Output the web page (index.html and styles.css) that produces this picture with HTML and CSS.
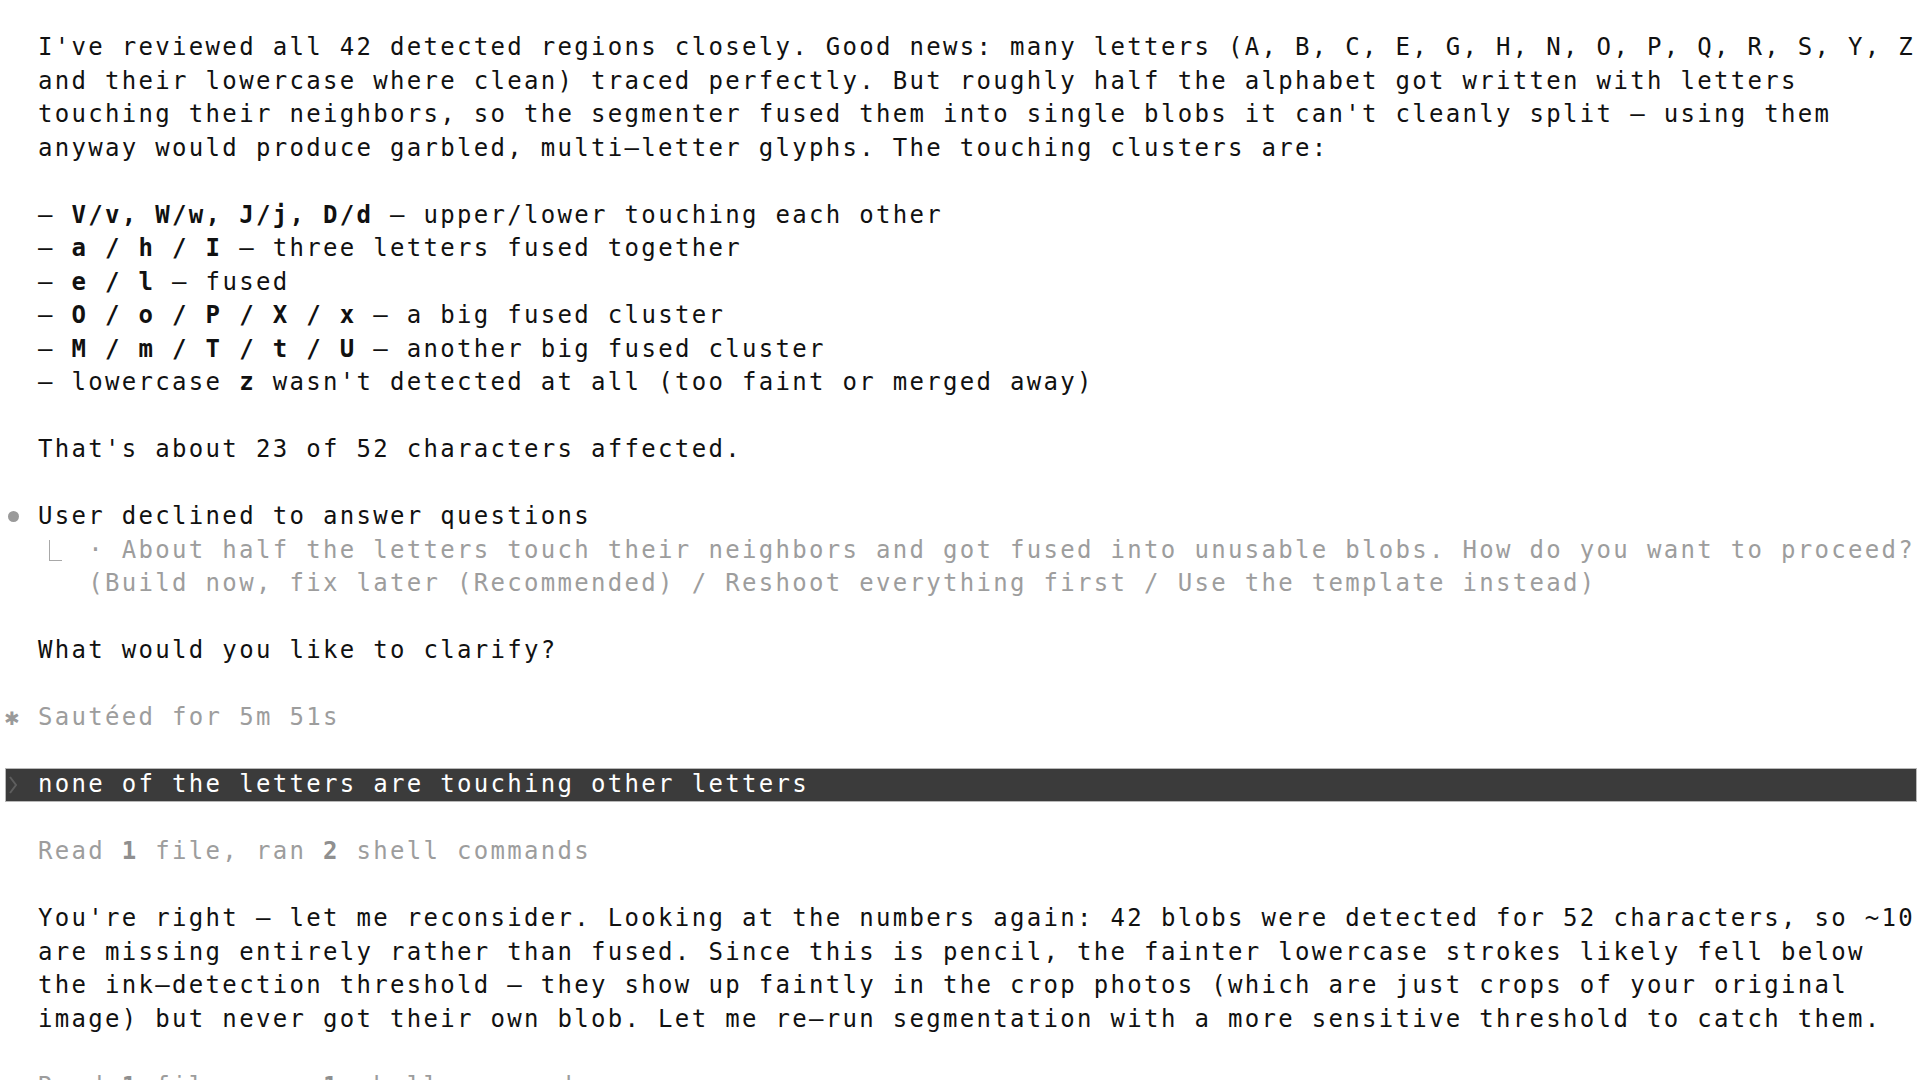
FILE: index.html
```html
<!DOCTYPE html>
<html lang="en">
<head>
<meta charset="utf-8">
<title>Terminal</title>
<link rel="stylesheet" href="styles.css">
</head>
<body>
<div class="term">
  <div class="row"><span class="gut"></span><span class="txt">I've reviewed all 42 detected regions closely. Good news: many letters (A, B, C, E, G, H, N, O, P, Q, R, S, Y, Z</span></div>
  <div class="row"><span class="gut"></span><span class="txt">and their lowercase where clean) traced perfectly. But roughly half the alphabet got written with letters</span></div>
  <div class="row"><span class="gut"></span><span class="txt">touching their neighbors, so the segmenter fused them into single blobs it can't cleanly split – using them</span></div>
  <div class="row"><span class="gut"></span><span class="txt">anyway would produce garbled, multi–letter glyphs. The touching clusters are:</span></div>
  <div class="row blank"></div>
  <div class="row"><span class="gut"></span><span class="txt">– <b>V/v, W/w, J/j, D/d</b> – upper/lower touching each other</span></div>
  <div class="row"><span class="gut"></span><span class="txt">– <b>a / h / I</b> – three letters fused together</span></div>
  <div class="row"><span class="gut"></span><span class="txt">– <b>e / l</b> – fused</span></div>
  <div class="row"><span class="gut"></span><span class="txt">– <b>O / o / P / X / x</b> – a big fused cluster</span></div>
  <div class="row"><span class="gut"></span><span class="txt">– <b>M / m / T / t / U</b> – another big fused cluster</span></div>
  <div class="row"><span class="gut"></span><span class="txt">– lowercase <b>z</b> wasn't detected at all (too faint or merged away)</span></div>
  <div class="row blank"></div>
  <div class="row"><span class="gut"></span><span class="txt">That's about 23 of 52 characters affected.</span></div>
  <div class="row blank"></div>
  <div class="row"><span class="gut"><span class="dot"></span></span><span class="txt">User declined to answer questions</span></div>
  <div class="row dim"><span class="gut"></span><span class="txt"><span class="tree"></span>  · About half the letters touch their neighbors and got fused into unusable blobs. How do you want to proceed?</span></div>
  <div class="row dim"><span class="gut"></span><span class="txt">   (Build now, fix later (Recommended) / Reshoot everything first / Use the template instead)</span></div>
  <div class="row blank"></div>
  <div class="row"><span class="gut"></span><span class="txt">What would you like to clarify?</span></div>
  <div class="row blank"></div>
  <div class="row dim"><span class="gut">✱</span><span class="txt">Sautéed for 5m 51s</span></div>
  <div class="row blank"></div>
  <div class="row prompt"><span class="gut chev"><svg width="10" height="18" viewBox="0 0 10 18"><polyline points="2,1 8,9 2,17" fill="none" stroke="#5e5e5e" stroke-width="2"/></svg></span><span class="txt">none of the letters are touching other letters</span></div>
  <div class="row blank"></div>
  <div class="row dim"><span class="gut"></span><span class="txt">Read <b>1</b> file, ran <b>2</b> shell commands</span></div>
  <div class="row blank"></div>
  <div class="row"><span class="gut"></span><span class="txt">You're right – let me reconsider. Looking at the numbers again: 42 blobs were detected for 52 characters, so ~10</span></div>
  <div class="row"><span class="gut"></span><span class="txt">are missing entirely rather than fused. Since this is pencil, the fainter lowercase strokes likely fell below</span></div>
  <div class="row"><span class="gut"></span><span class="txt">the ink–detection threshold – they show up faintly in the crop photos (which are just crops of your original</span></div>
  <div class="row"><span class="gut"></span><span class="txt">image) but never got their own blob. Let me re–run segmentation with a more sensitive threshold to catch them.</span></div>
  <div class="row blank"></div>
  <div class="row dim"><span class="gut"></span><span class="txt">Read <b>1</b> file, ran <b>1</b> shell command</span></div>
</div>
</body>
</html>
```

FILE: styles.css
```css
html, body {
  margin: 0;
  padding: 0;
  background: #ffffff;
}

body {
  width: 1920px;
  height: 1080px;
  overflow: hidden;
}

.term {
  padding: 31px 0 0 4.5px;
  font-family: "DejaVu Sans Mono", "Liberation Mono", monospace;
  font-size: 24px;
  letter-spacing: 2.31px;
  line-height: 33.5px;
  color: #111111;
}

.row {
  display: flex;
  height: 33.5px;
  white-space: pre;
}

.gut {
  flex: 0 0 33.52px;
  width: 33.52px;
  display: flex;
  align-items: center;
  justify-content: flex-start;
  color: #9a9a9a;
}

.txt {
  white-space: pre;
}

b {
  font-weight: bold;
}

.dim {
  color: #9d9d9d;
}

.dim b {
  color: #8f8f8f;
}

.dot {
  display: block;
  width: 11px;
  height: 11px;
  border-radius: 50%;
  background: #9a9a9a;
  margin-left: 3px;
}

.tree {
  display: inline-block;
  position: relative;
  width: 16.76px;
  height: 33.5px;
  vertical-align: top;
}

.tree::before {
  content: "";
  position: absolute;
  left: 11px;
  top: 6px;
  width: 12px;
  height: 20px;
  border-left: 1.5px solid #a8a8a8;
  border-bottom: 1.5px solid #a8a8a8;
}

.prompt {
  background: #3b3b3b;
  color: #ffffff;
  width: 1912px;
  box-sizing: border-box;
  border: 1px solid #b8b8b8;
  align-items: center;
}

.prompt .gut {
  flex: 0 0 32.52px;
  width: 32.52px;
  padding-left: 2px;
  box-sizing: border-box;
}

.prompt .gut svg {
  display: block;
}
```
